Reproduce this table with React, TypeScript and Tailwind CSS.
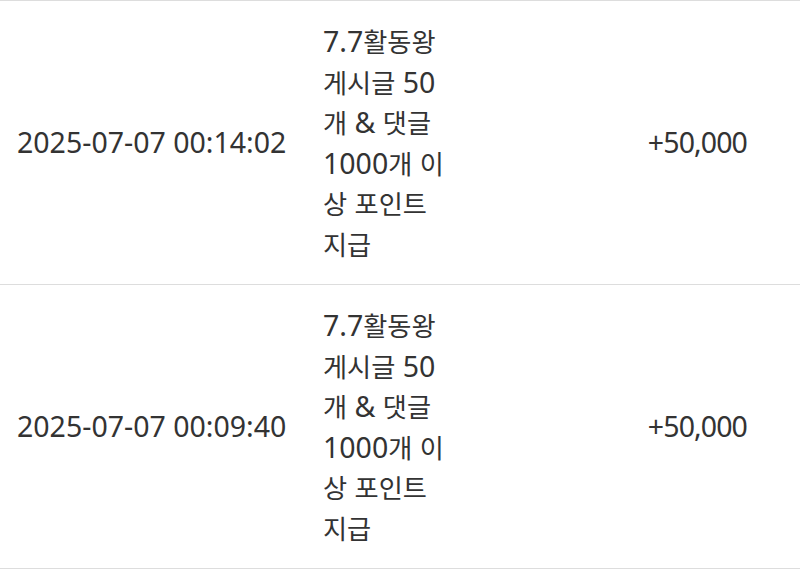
import React from "react";

type Row = {
  date: string;
  memo: string;
  amount: string;
};

const rows: Row[] = [
  {
    date: "2025-07-07 00:14:02",
    memo: "7.7활동왕 게시글 50개 & 댓글 1000개 이상 포인트 지급",
    amount: "+50,000",
  },
  {
    date: "2025-07-07 00:09:40",
    memo: "7.7활동왕 게시글 50개 & 댓글 1000개 이상 포인트 지급",
    amount: "+50,000",
  },
];

// hangul glyphs in the reference run narrower than the latin ones
const Memo = ({ text }: { text: string }) => {
  const parts = text.split(/([\uAC00-\uD7A3]+)/);
  return (
    <>
      {parts.map((p, i) =>
        /[\uAC00-\uD7A3]/.test(p) ? (
          <span key={i} className="text-[0.92em] leading-[28px]">
            {p}
          </span>
        ) : (
          <span key={i}>{p}</span>
        )
      )}
    </>
  );
};

export default function App() {
  return (
    <div
      className="w-[800px] h-[578px] bg-white text-[#333333] text-[28.5px] leading-[40.5px] overflow-hidden"
      style={{ fontFamily: '"Noto Sans", "Noto Sans CJK KR", sans-serif' }}
    >
      <div className="border-b border-[#dddddd]">
        {rows.map((row, i) => (
          <div
            key={i}
            className="grid grid-cols-[323px_130px_1fr] items-center border-t border-[#dddddd] py-5"
          >
            <div className="pl-[17px] whitespace-nowrap">{row.date}</div>
            <div>
              <Memo text={row.memo} />
            </div>
            <div className="text-right pr-[53px] tracking-[-0.9px]">{row.amount}</div>
          </div>
        ))}
      </div>
    </div>
  );
}
